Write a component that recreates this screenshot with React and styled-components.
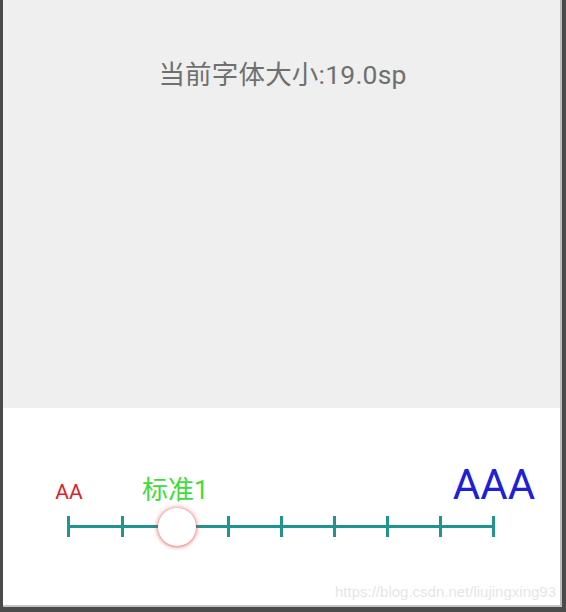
import React from "react";
import styled, { createGlobalStyle } from "styled-components";

const GlobalStyle = createGlobalStyle`
  html, body {
    margin: 0;
    padding: 0;
    background: #4b4b4b;
  }
  #root {
    width: 566px;
    height: 612px;
  }
`;

const STEP = 53.125;
const STEPS = 8;

const Device = styled.div`
  width: 566px;
  height: 612px;
  box-sizing: border-box;
  padding: 0 4px 5px 3px;
  background: #4b4b4b;
  display: flex;
`;

const Screen = styled.div`
  flex: 1;
  display: flex;
  flex-direction: column;
  border-right: 2px solid #bdbdbd;
  border-bottom: 2px solid #c4c4c4;
  font-family: Roboto, "Noto Sans CJK SC", sans-serif;
  overflow: hidden;
`;

const Preview = styled.div`
  height: 408px;
  flex-shrink: 0;
  background: #efefef;
  display: flex;
  justify-content: center;
  padding: 62px 0 0 2px;
  box-sizing: border-box;
`;

const SizeText = styled.div`
  font-size: 26.5px;
  line-height: 1;
  color: #707070;
  letter-spacing: 0.2px;
`;

const Panel = styled.div`
  flex: 1;
  background: #ffffff;
  display: flex;
  flex-direction: column;
  padding-top: 56px;
`;

const SliderBlock = styled.div`
  margin-left: 39.4px;
  width: ${STEP * (STEPS + 1)}px;
  display: flex;
  flex-direction: column;
`;

const Labels = styled.div`
  display: grid;
  grid-template-columns: repeat(${STEPS + 1}, ${STEP}px);
  align-items: last baseline;
`;

const Label = styled.div`
  grid-column: ${(p) => p.$at + 1};
  display: flex;
  justify-content: center;
  white-space: nowrap;
  line-height: 1;
  font-size: ${(p) => p.$size}px;
  color: ${(p) => p.$color};
`;

const Track = styled.div`
  position: relative;
  margin: 10px 0 0 ${STEP / 2 - 1.5}px;
  width: ${STEP * STEPS + 3}px;
  height: 21px;
  display: flex;
  justify-content: space-between;
  background: linear-gradient(#1f958d, #1f958d) center / 100% 3px no-repeat;
`;

const Tick = styled.span`
  width: 3px;
  height: 100%;
  background: #1f958d;
`;

const Thumb = styled.span`
  position: absolute;
  top: 50%;
  width: 38px;
  height: 38px;
  margin: -19px 0 0 -16px;
  border-radius: 50%;
  background: #ffffff;
  box-shadow: 0 0 4px 1px rgba(228, 60, 60, 0.5),
    0 1px 3px rgba(200, 40, 40, 0.35);
`;

const Footer = styled.div`
  margin-top: auto;
  display: flex;
  justify-content: flex-end;
  padding: 0 4px 5px 0;
`;

const Watermark = styled.span`
  font-family: "Liberation Sans", Arial, sans-serif;
  font-size: 15px;
  color: #e6e6e6;
`;

const labels = [
  { at: 0, text: "AA", size: 21, color: "#e0202c" },
  { at: 2, text: "标准1", size: 26, color: "#3fdc3c" },
  { at: 8, text: "AAA", size: 42, color: "#1c20d8" },
];

export default function App() {
  const current = 2;
  return (
    <>
      <GlobalStyle />
      <Device>
        <Screen>
          <Preview>
            <SizeText>当前字体大小:19.0sp</SizeText>
          </Preview>
          <Panel>
            <SliderBlock>
              <Labels>
                {labels.map((l) => (
                  <Label key={l.at} $at={l.at} $size={l.size} $color={l.color}>
                    {l.text}
                  </Label>
                ))}
              </Labels>
              <Track>
                {Array.from({ length: STEPS + 1 }, (_, i) => (
                  <Tick key={i} />
                ))}
                <Thumb style={{ left: `${(current / STEPS) * (STEP * STEPS)}px` }} />
              </Track>
            </SliderBlock>
            <Footer>
              <Watermark>https://blog.csdn.net/liujingxing93</Watermark>
            </Footer>
          </Panel>
        </Screen>
      </Device>
    </>
  );
}
